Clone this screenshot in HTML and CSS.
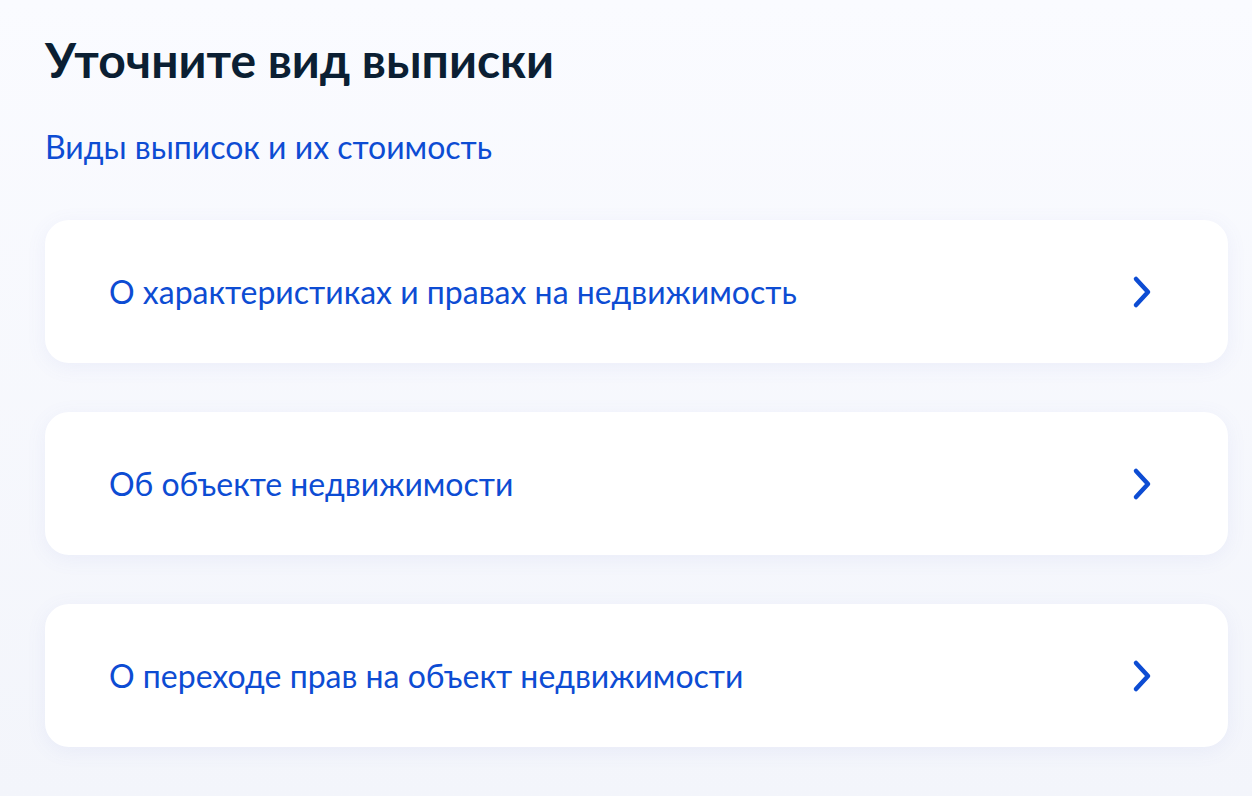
FILE: index.html
```html
<!DOCTYPE html>
<html lang="ru">
<head>
<meta charset="utf-8">
<link rel="stylesheet" href="styles.css">
</head>
<body>
<main class="page">
  <h1 class="title">Уточните вид выписки</h1>
  <a class="info-link" href="#">Виды выписок и их стоимость</a>
  <ul class="options">
    <li class="option"><span class="option-text">О характеристиках и правах на недвижимость</span>
      <svg class="chev" width="20" height="34" viewBox="0 0 20 34"><path d="M4 4L16 17L4 30" fill="none" stroke="#0d4cd3" stroke-width="4.5" stroke-linecap="round" stroke-linejoin="round"/></svg></li>
    <li class="option"><span class="option-text">Об объекте недвижимости</span>
      <svg class="chev" width="20" height="34" viewBox="0 0 20 34"><path d="M4 4L16 17L4 30" fill="none" stroke="#0d4cd3" stroke-width="4.5" stroke-linecap="round" stroke-linejoin="round"/></svg></li>
    <li class="option"><span class="option-text">О переходе прав на объект недвижимости</span>
      <svg class="chev" width="20" height="34" viewBox="0 0 20 34"><path d="M4 4L16 17L4 30" fill="none" stroke="#0d4cd3" stroke-width="4.5" stroke-linecap="round" stroke-linejoin="round"/></svg></li>
  </ul>
</main>
</body>
</html>
```
FILE: styles.css
```css
html, body { margin: 0; padding: 0; }
body {
  font-family: Lato, "Noto Sans", sans-serif;
  background: linear-gradient(180deg, #fafbff 0%, #f3f5fb 100%);
  min-height: 796px;
}
.page { padding: 30px 24px 0 45px; }
.title {
  margin: 0;
  font-size: 48px;
  font-weight: 700;
  line-height: 60px;
  color: #0b1f33;
}
.info-link {
  display: inline-block;
  margin-top: 37px;
  font-size: 32px;
  line-height: 40px;
  color: #0d4cd3;
  text-decoration: none;
}
.options {
  list-style: none;
  margin: 53px 0 0;
  padding: 0;
  display: flex;
  flex-direction: column;
  gap: 49px;
}
.option {
  height: 143px;
  background: #fff;
  border-radius: 24px;
  box-shadow: 0 4px 20px rgba(102, 119, 204, 0.08);
  display: flex;
  align-items: center;
  justify-content: space-between;
  padding: 0 76px 0 64px;
}
.option-text {
  font-size: 32px;
  color: #0d4cd3;
}
```
